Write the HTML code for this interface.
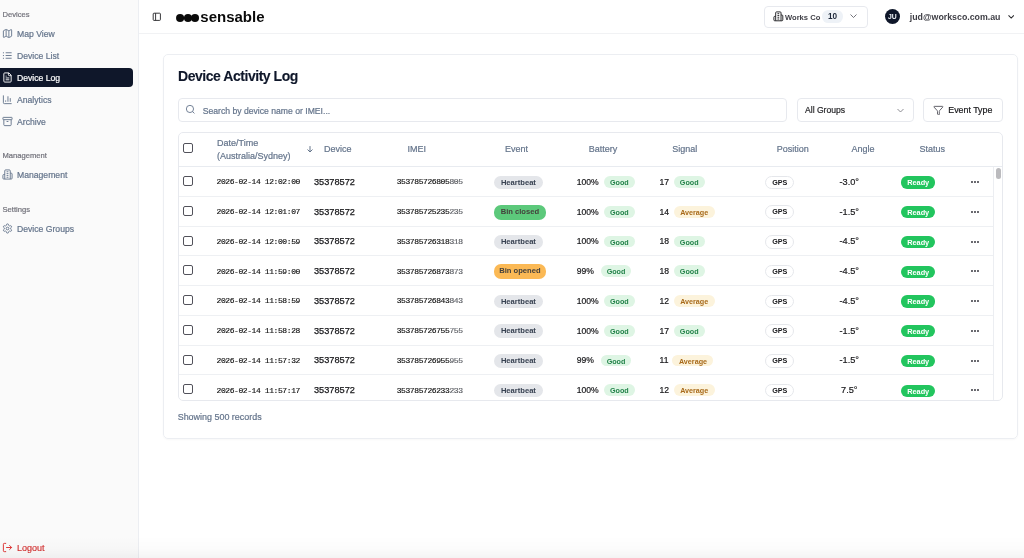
<!DOCTYPE html>
<html><head><meta charset="utf-8">
<style>
*{box-sizing:border-box;margin:0;padding:0}
html,body{width:1024px;height:558px;overflow:hidden;background:#fff;font-family:"Liberation Sans",sans-serif;color:#0f172a}
#root{position:absolute;left:0;top:0;width:1024px;height:558px;will-change:transform;-webkit-text-stroke-width:0.2px}
.badge,#root b{-webkit-text-stroke-width:0}
.abs{position:absolute}
#side{position:absolute;left:0;top:0;width:139px;height:558px;background:#fafafa;border-right:1px solid #eceef2}
.sl{position:absolute;left:2.5px;font-size:7.6px;color:#71717a;line-height:10px}
.si{position:absolute;left:0;width:133px;height:19.2px;font-size:8.65px;color:#64748b;line-height:19.2px}
.si span{position:absolute;left:17px;top:1px}
.si svg{position:absolute;left:1.9px;top:4.2px;width:11px;height:11px}
.si.act{background:#0f172a;color:#fff;border-radius:0 4px 4px 0}
#hdr{position:absolute;left:139px;top:0;width:885px;height:34px;border-bottom:1px solid #f1f2f4}
#card{position:absolute;left:162.5px;top:53.5px;width:855px;height:385px;border:1px solid #eceef2;border-radius:5px;box-shadow:0 1px 2px rgba(0,0,0,.03)}
.title{position:absolute;left:178px;top:66.2px;font-size:14px;font-weight:bold;letter-spacing:-0.46px;-webkit-text-stroke-width:0.12px;color:#0f172a;line-height:20px}
.inp{position:absolute;top:98px;height:23.6px;border:1px solid #e7e9ee;border-radius:4px;background:#fff}
#tbl{position:absolute;left:178.3px;top:131.9px;width:824.3px;height:269px;border:1px solid #e7e9ee;border-radius:5px;overflow:hidden}
#thead{position:absolute;left:0;top:0;width:100%;height:34.4px;border-bottom:1.4px solid #e8ebf0}
.th{position:absolute;font-size:9px;color:#64748b;line-height:12.2px;top:10.6px}
#tbody{position:absolute;left:0;top:34.4px;width:814.6px;height:234px;overflow:hidden;border-right:1px solid #eceef2}
.row{position:absolute;left:0;width:814px;height:29.74px;border-bottom:1px solid #eef0f3}
.row>div{position:absolute}
.cb{position:absolute;left:3.6px;width:10px;height:10px;border:1px solid #52525b;border-radius:2px;top:8.8px}
.mono{font-family:"Liberation Mono",monospace;font-size:8px;letter-spacing:-0.41px;color:#111;-webkit-text-stroke:0.15px #111;top:0.2px;line-height:29.74px}
.dt{left:37.2px}
.imei{left:217.4px}
.fade{color:#80848c}
.dev{left:134.7px;top:0.7px;font-size:9.2px;color:#18181b;line-height:29.74px;-webkit-text-stroke:0.25px #18181b}
.badge{height:11.8px;line-height:13.2px;border-radius:6px;font-size:7.2px;font-weight:bold;text-align:center;top:8.9px}
.ev{left:314.6px;height:13.6px;line-height:13.6px;top:8.4px;border-radius:7px;font-size:7.6px}
.hb{background:#e4e6ea;color:#374151;width:49px}
.bc{background:#5cc97b;color:#44403c;width:52px;height:14.8px;line-height:14.2px;top:7.8px}
.bo{background:#fbb955;color:#44403c;width:52px;height:14.8px;line-height:14.2px;top:7.8px}
.num{font-size:8.6px;color:#18181b;line-height:29.74px;top:0.7px}
.bat{left:397.4px}
.bq{left:424.7px;width:30.7px}
.bq.w2{left:421.4px}
.good{background:#def5e4;color:#23834a}
.avg{background:#fcf3dc;color:#a86a1a}
.sig{left:480.2px}
.sq{left:494.4px}
.sq.s11{left:493.2px}
.sq.good{width:31px}
.sq.avg{width:41px}
.gps{left:586.1px;width:28.8px;height:13.4px;line-height:11.4px;top:8.4px;border:1px solid #e5e7eb;background:#fff;color:#18181b;border-radius:7px}
.ang{left:570px;width:200px;text-align:center;font-size:9.2px}
.ready{left:721.8px;width:34.2px;height:12.2px;line-height:13.2px;top:9.1px;background:#22c55e;color:#fff;font-size:7.35px}
.dots{left:791.7px;top:14.2px;width:9px;height:2px}
.dots i{position:absolute;top:0;width:2px;height:2px;border-radius:0.9px;background:#3f3f46}
.dots i:nth-child(1){left:0}.dots i:nth-child(2){left:3px}.dots i:nth-child(3){left:6px}
</style></head><body><div id="root">
<div id="side">
  <div class="sl" style="top:10px">Devices</div>
  <div class="si" style="top:24px"><svg viewBox="0 0 24 24" fill="none" stroke="#64748b" stroke-width="2"><path d="M14.106 5.553a2 2 0 0 0 1.788 0l3.659-1.83A1 1 0 0 1 21 4.619v12.764a1 1 0 0 1-.553.894l-4.553 2.277a2 2 0 0 1-1.788 0l-4.212-2.106a2 2 0 0 0-1.788 0l-3.659 1.83A1 1 0 0 1 3 19.381V6.618a1 1 0 0 1 .553-.894l4.553-2.277a2 2 0 0 1 1.788 0zM15 5.764v15M9 3.236v15"/></svg><span>Map View</span></div>
  <div class="si" style="top:46px"><svg viewBox="0 0 24 24" fill="none" stroke="#64748b" stroke-width="2"><path d="M8 6h13M8 12h13M8 18h13"/><rect x="2" y="5" width="2.2" height="2.2" fill="#64748b" stroke="none"/><rect x="2" y="11" width="2.2" height="2.2" fill="#64748b" stroke="none"/><rect x="2" y="17" width="2.2" height="2.2" fill="#64748b" stroke="none"/></svg><span>Device List</span></div>
  <div class="si act" style="top:67.9px"><svg viewBox="0 0 24 24" fill="none" stroke="#fff" stroke-width="2"><path d="M15 2H6a2 2 0 0 0-2 2v16a2 2 0 0 0 2 2h12a2 2 0 0 0 2-2V7z"/><path d="M14 2v4a2 2 0 0 0 2 2h4M10 9H8M16 13H8M16 17H8"/></svg><span>Device Log</span></div>
  <div class="si" style="top:90px"><svg viewBox="0 0 24 24" fill="none" stroke="#64748b" stroke-width="2"><path d="M3 3v16a2 2 0 0 0 2 2h16M18 17V9M13 17V5M8 17v-3"/></svg><span>Analytics</span></div>
  <div class="si" style="top:112px"><svg viewBox="0 0 24 24" fill="none" stroke="#64748b" stroke-width="2"><rect x="2" y="3" width="20" height="5" rx="1"/><path d="M4 8v11a2 2 0 0 0 2 2h12a2 2 0 0 0 2-2V8M10 12h4"/></svg><span>Archive</span></div>
  <div class="sl" style="top:151px">Management</div>
  <div class="si" style="top:165px"><svg viewBox="0 0 24 24" fill="none" stroke="#64748b" stroke-width="2"><path d="M6 22V4a2 2 0 0 1 2-2h8a2 2 0 0 1 2 2v18zM6 12H4a2 2 0 0 0-2 2v6a2 2 0 0 0 2 2h2M18 9h2a2 2 0 0 1 2 2v9a2 2 0 0 1-2 2h-2M10 6h4M10 10h4M10 14h4M10 18h4"/></svg><span>Management</span></div>
  <div class="sl" style="top:205px">Settings</div>
  <div class="si" style="top:219px"><svg viewBox="0 0 24 24" fill="none" stroke="#64748b" stroke-width="2"><circle cx="12" cy="12" r="3"/><path d="M12.22 2h-.44a2 2 0 0 0-2 2v.18a2 2 0 0 1-1 1.73l-.43.25a2 2 0 0 1-2 0l-.15-.08a2 2 0 0 0-2.73.73l-.22.38a2 2 0 0 0 .73 2.730l.15.1a2 2 0 0 1 1 1.72v.51a2 2 0 0 1-1 1.74l-.15.09a2 2 0 0 0-.73 2.73l.22.38a2 2 0 0 0 2.73.73l.15-.08a2 2 0 0 1 2 0l.43.25a2 2 0 0 1 1 1.73V20a2 2 0 0 0 2 2h.44a2 2 0 0 0 2-2v-.18a2 2 0 0 1 1-1.73l.43-.25a2 2 0 0 1 2 0l.15.08a2 2 0 0 0 2.73-.73l.22-.39a2 2 0 0 0-.73-2.73l-.15-.08a2 2 0 0 1-1-1.74v-.5a2 2 0 0 1 1-1.74l.15-.09a2 2 0 0 0 .73-2.73l-.22-.38a2 2 0 0 0-2.73-.73l-.15.08a2 2 0 0 1-2 0l-.43-.25a2 2 0 0 1-1-1.73V4a2 2 0 0 0-2-2z"/></svg><span>Device Groups</span></div>
  <div class="si" style="top:538px;color:#d32f2f;font-size:9px;-webkit-text-stroke:0.15px #d32f2f"><svg viewBox="0 0 24 24" fill="none" stroke="#dc2626" stroke-width="2"><path d="M9 21H5a2 2 0 0 1-2-2V5a2 2 0 0 1 2-2h4M16 17l5-5-5-5M21 12H9"/></svg><span>Logout</span></div>
</div>

<div id="hdr"></div>
<svg class="abs" style="left:151.7px;top:12px;width:9.6px;height:9.6px" viewBox="0 0 24 24" fill="none" stroke="#27272a" stroke-width="2.3"><rect x="3" y="3" width="18" height="18" rx="2"/><path d="M9 3v18"/></svg>
<svg class="abs" style="left:175px;top:12.8px;width:25px;height:10px" viewBox="0 0 25 10"><circle cx="5.1" cy="5" r="4.05" fill="#0a0a0a"/><circle cx="13.0" cy="5" r="4.05" fill="#0a0a0a"/><circle cx="20.0" cy="5" r="4.05" fill="#0a0a0a"/></svg>
<div class="abs" style="-webkit-text-stroke-width:0;left:200.3px;top:7px;font-size:15px;font-weight:bold;color:#0a0a0a;line-height:20px">sensable</div>

<div class="abs" style="left:763.6px;top:6.2px;width:104px;height:21.5px;border:1px solid #e7e9ee;border-radius:4px"></div>
<svg class="abs" style="left:773.3px;top:11.1px;width:10.7px;height:10.7px" viewBox="0 0 24 24" fill="none" stroke="#27272a" stroke-width="2.2"><path d="M6 22V4a2 2 0 0 1 2-2h8a2 2 0 0 1 2 2v18zM6 12H4a2 2 0 0 0-2 2v6a2 2 0 0 0 2 2h2M18 9h2a2 2 0 0 1 2 2v9a2 2 0 0 1-2 2h-2M10 6h4M10 10h4M10 14h4M10 18h4"/></svg>
<div class="abs" style="-webkit-text-stroke-width:0;left:785px;top:11.6px;font-size:7.6px;font-weight:bold;color:#3f3f46;line-height:11px">Works Co</div>
<div class="abs" style="-webkit-text-stroke-width:0;left:822.1px;top:10.4px;width:20.8px;height:12.6px;border-radius:6.3px;background:#eef2f7;font-size:8.2px;font-weight:bold;color:#1e293b;text-align:center;line-height:13.6px">10</div>
<svg class="abs" style="left:849.5px;top:14px;width:7px;height:4.5px" viewBox="0 0 14 9" fill="none" stroke="#52525b" stroke-width="1.6"><path d="M1 1l6 6 6-6"/></svg>
<div class="abs" style="-webkit-text-stroke-width:0;left:884.8px;top:9px;width:15.2px;height:15.2px;border-radius:50%;background:#0f172a;color:#f1f5f9;font-size:6.8px;font-weight:bold;text-align:center;line-height:15.2px">JU</div>
<div class="abs" style="-webkit-text-stroke-width:0;left:909.8px;top:10.5px;font-size:8.8px;font-weight:bold;color:#3f3f46;line-height:12px">jud@worksco.com.au</div>
<svg class="abs" style="left:1007.8px;top:14.6px;width:6.4px;height:4px" viewBox="0 0 14 9" fill="none" stroke="#27272a" stroke-width="2.4"><path d="M1 1l6 6 6-6"/></svg>

<div id="card"></div>
<div class="title">Device Activity Log</div>
<div class="inp" style="left:178px;width:609px"></div>
<svg class="abs" style="left:184.5px;top:104.3px;width:10.8px;height:10.8px" viewBox="0 0 24 24" fill="none" stroke="#64748b" stroke-width="2"><circle cx="11" cy="11" r="8"/><path d="M21 21l-4.3-4.3"/></svg>
<div class="abs" style="left:202.7px;top:104.5px;font-size:8.65px;color:#64748b;line-height:12px">Search by device name or IMEI...</div>
<div class="inp" style="left:797.4px;width:116.2px"></div>
<div class="abs" style="left:805px;top:104px;font-size:8.6px;color:#27272a;line-height:12px">All Groups</div>
<svg class="abs" style="left:897px;top:107.5px;width:7px;height:5px" viewBox="0 0 14 8" fill="none" stroke="#71717a" stroke-width="1.6"><path d="M1 1l6 6 6-6"/></svg>
<div class="inp" style="left:923px;width:79.6px"></div>
<svg class="abs" style="left:933px;top:104.5px;width:10.8px;height:10.8px" viewBox="0 0 24 24" fill="none" stroke="#52525b" stroke-width="2"><path d="M10 20a1 1 0 0 0 .553.895l2 1A1 1 0 0 0 14 21v-7a2 2 0 0 1 .517-1.341L21.74 4.67A1 1 0 0 0 21 3H3a1 1 0 0 0-.742 1.67l7.225 7.989A2 2 0 0 1 10 14z"/></svg>
<div class="abs" style="left:948.3px;top:104px;font-size:8.85px;color:#18181b;line-height:12px">Event Type</div>

<div id="tbl">
  <div id="thead">
    <div class="cb" style="top:10px"></div>
    <div class="th" style="left:37.7px;top:4.5px">Date/Time<br>(Australia/Sydney)</div>
    <svg class="abs" style="left:128.1px;top:12.9px;width:6px;height:6.6px" viewBox="0 0 12 13.2" fill="none" stroke="#64748b" stroke-width="2" stroke-linecap="round" stroke-linejoin="round"><path d="M6 1v11M1.6 7.6L6 12l4.4-4.4"/></svg>
    <div class="th" style="left:144.7px">Device</div>
    <div class="th" style="left:228.3px">IMEI</div>
    <div class="th" style="left:325.7px">Event</div>
    <div class="th" style="left:409.5px">Battery</div>
    <div class="th" style="left:493px">Signal</div>
    <div class="th" style="left:597.5px">Position</div>
    <div class="th" style="left:672.1px">Angle</div>
    <div class="th" style="left:740.2px">Status</div>
  </div>
  <div id="tbody">
<div class="row" style="top:0.00px">
<div class="cb"></div>
<div class="mono dt">2026-02-14 12:02:00</div>
<div class="dev">35378572</div>
<div class="mono imei">353785726805<span class="fade">805</span></div>
<div class="badge ev hb">Heartbeat</div>
<div class="num bat">100%</div><div class="badge good bq w3">Good</div>
<div class="num sig">17</div><div class="badge good sq">Good</div>
<div class="badge gps">GPS</div>
<div class="num ang">-3.0°</div>
<div class="badge ready">Ready</div>
<div class="dots" style="top:13.70px"><i></i><i></i><i></i></div>
</div>
<div class="row" style="top:29.74px">
<div class="cb"></div>
<div class="mono dt">2026-02-14 12:01:07</div>
<div class="dev">35378572</div>
<div class="mono imei">353785725235<span class="fade">235</span></div>
<div class="badge ev bc">Bin closed</div>
<div class="num bat">100%</div><div class="badge good bq w3">Good</div>
<div class="num sig">14</div><div class="badge avg sq">Average</div>
<div class="badge gps">GPS</div>
<div class="num ang">-1.5°</div>
<div class="badge ready">Ready</div>
<div class="dots" style="top:13.96px"><i></i><i></i><i></i></div>
</div>
<div class="row" style="top:59.48px">
<div class="cb"></div>
<div class="mono dt">2026-02-14 12:00:59</div>
<div class="dev">35378572</div>
<div class="mono imei">353785726318<span class="fade">318</span></div>
<div class="badge ev hb">Heartbeat</div>
<div class="num bat">100%</div><div class="badge good bq w3">Good</div>
<div class="num sig">18</div><div class="badge good sq">Good</div>
<div class="badge gps">GPS</div>
<div class="num ang">-4.5°</div>
<div class="badge ready">Ready</div>
<div class="dots" style="top:14.22px"><i></i><i></i><i></i></div>
</div>
<div class="row" style="top:89.22px">
<div class="cb"></div>
<div class="mono dt">2026-02-14 11:59:00</div>
<div class="dev">35378572</div>
<div class="mono imei">353785726873<span class="fade">873</span></div>
<div class="badge ev bo">Bin opened</div>
<div class="num bat">99%</div><div class="badge good bq w2">Good</div>
<div class="num sig">18</div><div class="badge good sq">Good</div>
<div class="badge gps">GPS</div>
<div class="num ang">-4.5°</div>
<div class="badge ready">Ready</div>
<div class="dots" style="top:13.48px"><i></i><i></i><i></i></div>
</div>
<div class="row" style="top:118.96px">
<div class="cb"></div>
<div class="mono dt">2026-02-14 11:58:59</div>
<div class="dev">35378572</div>
<div class="mono imei">353785726843<span class="fade">843</span></div>
<div class="badge ev hb">Heartbeat</div>
<div class="num bat">100%</div><div class="badge good bq w3">Good</div>
<div class="num sig">12</div><div class="badge avg sq">Average</div>
<div class="badge gps">GPS</div>
<div class="num ang">-4.5°</div>
<div class="badge ready">Ready</div>
<div class="dots" style="top:13.74px"><i></i><i></i><i></i></div>
</div>
<div class="row" style="top:148.70px">
<div class="cb"></div>
<div class="mono dt">2026-02-14 11:58:28</div>
<div class="dev">35378572</div>
<div class="mono imei">353785726755<span class="fade">755</span></div>
<div class="badge ev hb">Heartbeat</div>
<div class="num bat">100%</div><div class="badge good bq w3">Good</div>
<div class="num sig">17</div><div class="badge good sq">Good</div>
<div class="badge gps">GPS</div>
<div class="num ang">-1.5°</div>
<div class="badge ready">Ready</div>
<div class="dots" style="top:14.00px"><i></i><i></i><i></i></div>
</div>
<div class="row" style="top:178.44px">
<div class="cb"></div>
<div class="mono dt">2026-02-14 11:57:32</div>
<div class="dev">35378572</div>
<div class="mono imei">353785726955<span class="fade">955</span></div>
<div class="badge ev hb">Heartbeat</div>
<div class="num bat">99%</div><div class="badge good bq w2">Good</div>
<div class="num sig">11</div><div class="badge avg sq s11">Average</div>
<div class="badge gps">GPS</div>
<div class="num ang">-1.5°</div>
<div class="badge ready">Ready</div>
<div class="dots" style="top:14.26px"><i></i><i></i><i></i></div>
</div>
<div class="row" style="top:208.18px">
<div class="cb"></div>
<div class="mono dt">2026-02-14 11:57:17</div>
<div class="dev">35378572</div>
<div class="mono imei">353785726233<span class="fade">233</span></div>
<div class="badge ev hb">Heartbeat</div>
<div class="num bat">100%</div><div class="badge good bq w3">Good</div>
<div class="num sig">12</div><div class="badge avg sq">Average</div>
<div class="badge gps">GPS</div>
<div class="num ang">7.5°</div>
<div class="badge ready">Ready</div>
<div class="dots" style="top:13.52px"><i></i><i></i><i></i></div>
</div>
  </div>
  <div class="abs" style="left:816.5px;top:35.4px;width:5.2px;height:10.6px;border-radius:3px;background:#bbbbbe"></div>
</div>
<div class="abs" style="left:177.7px;top:411px;font-size:8.95px;color:#64748b;line-height:12px">Showing 500 records</div>
<div class="abs" style="left:0;top:536px;width:1024px;height:22px;background:linear-gradient(rgba(0,0,0,0),rgba(0,0,0,.012) 55%,rgba(0,0,0,.045))"></div>
</div></body></html>
